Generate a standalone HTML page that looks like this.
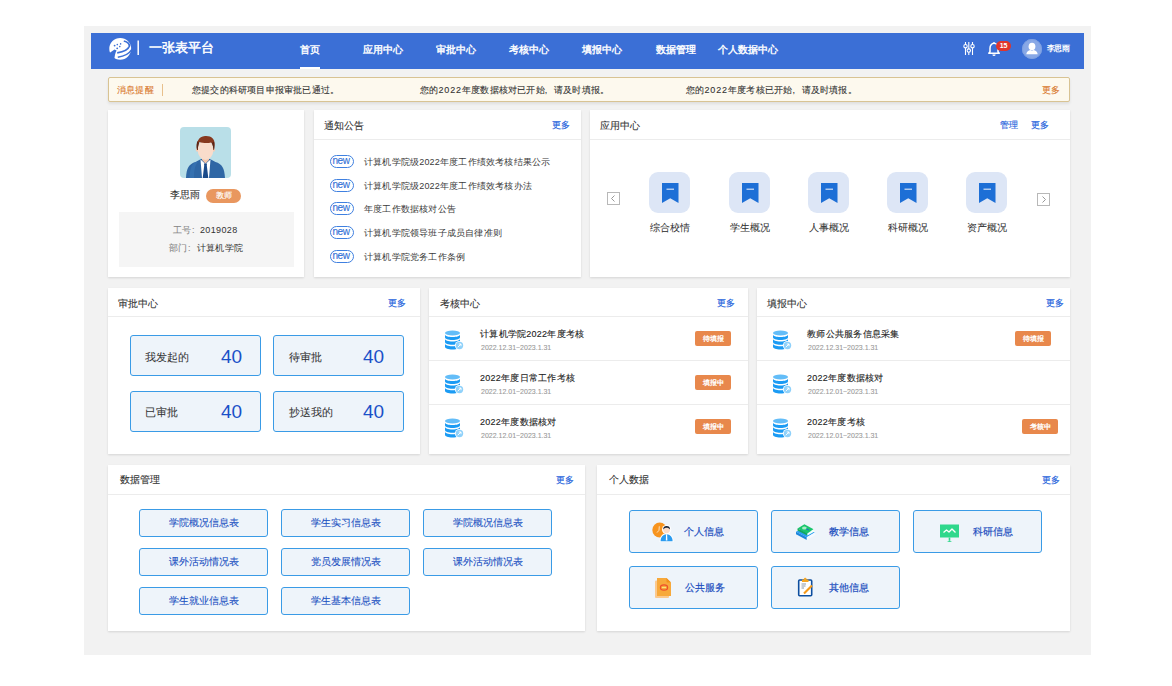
<!DOCTYPE html>
<html><head><meta charset="utf-8">
<style>
*{margin:0;padding:0;box-sizing:border-box}
html,body{width:1172px;height:686px;overflow:hidden;background:#fff}
body{font-family:"Liberation Sans",sans-serif;position:relative;color:#333;-webkit-text-stroke-width:0.1px}
.a{position:absolute;white-space:nowrap}
#wrap{position:absolute;left:84px;top:26px;width:1007px;height:629px;background:#f2f2f2}
#nav{position:absolute;left:91px;top:33px;width:993px;height:36px;background:#3b6fd6}
.nv{position:absolute;top:43px;height:14px;line-height:14px;font-size:10px;color:#fff;-webkit-text-stroke-width:0.4px}
#notice{position:absolute;left:108px;top:77px;width:962px;height:25px;background:#fdf9ee;border:1px solid #d8c393;border-radius:2px;box-shadow:0 2px 3px rgba(0,0,0,0.08)}
.nt{position:absolute;top:84px;height:13px;line-height:13px;font-size:9px;color:#333;letter-spacing:0.2px}
.card{position:absolute;background:#fff;box-shadow:0 1px 2px rgba(0,0,0,0.12)}
.hd{position:absolute;left:0;right:0;top:0;border-bottom:1px solid #ececec}
.ttl{position:absolute;font-size:10px;line-height:14px;height:14px;color:#333}
.more{position:absolute;font-size:9px;line-height:12px;height:12px;color:#2563dc;-webkit-text-stroke-width:0.15px}
.newb{position:absolute;width:24px;height:13px;border:1px solid #3f80e0;border-radius:7px;color:#2f6fd6;font-size:10px;line-height:10px;text-align:center;letter-spacing:-0.4px;-webkit-text-stroke-width:0.1px;padding-right:2px}
.nli{position:absolute;font-size:9px;line-height:12px;height:12px;color:#3a3a3a;letter-spacing:0.2px;margin-top:1px;-webkit-text-stroke-width:0}
.ibox{position:absolute;width:41px;height:41px;border-radius:9px;background:#dde6f6}
.ilab{position:absolute;font-size:10px;line-height:14px;height:14px;color:#333;-webkit-text-stroke-width:0.05px}
.sbox{position:absolute;width:131px;height:41px;background:#eef4fa;border:1px solid #3a9be6;border-radius:3px}
.slab{position:absolute;font-size:11px;line-height:14px;color:#333;-webkit-text-stroke-width:0.05px}
.snum{position:absolute;font-size:19px;line-height:20px;color:#1a50c8;-webkit-text-stroke-width:0}
.row{position:absolute;left:0;right:0;height:1px;background:#ececec}
.it{position:absolute;margin-left:1px;font-size:9px;line-height:13px;height:13px;color:#222;-webkit-text-stroke-width:0.12px;letter-spacing:0.25px}
.dt{position:absolute;font-size:8px;line-height:10px;height:10px;color:#999;margin-left:1.5px;transform:scaleX(0.875);transform-origin:0 0}
.bdg{position:absolute;width:36px;height:15px;background:#e8884c;border-radius:2px;color:#fff;font-size:7px;line-height:15px;text-align:center;-webkit-text-stroke-width:0.3px}
.btn{position:absolute;width:129px;height:28px;background:#eef4fa;border:1px solid #3a9be6;border-radius:3px;color:#1d52c2;font-size:10px;line-height:26px;text-align:center}
.pbtn{position:absolute;width:129px;height:43px;background:#eef4fa;border:1px solid #3a9be6;border-radius:3px}
.pl{position:absolute;font-size:10px;line-height:14px;color:#1d4fbf;-webkit-text-stroke-width:0.2px}
</style></head><body>
<div id="wrap"></div>
<div id="nav"></div>
<!-- logo -->
<svg class="a" style="left:108px;top:37px" width="24" height="24" viewBox="0 0 24 24">
<circle cx="12.2" cy="11.8" r="10.9" fill="#fff"/>
<path d="M0 17 L6.5 12.6 L8.6 13.4 C7.2 16 6.4 19.5 6.2 24 L0 24 Z" fill="#3b6fd6"/>
<path d="M15.8 4 C19.5 4.8 22 6.8 21.2 9.6 C20.2 12.6 15.5 14.8 9.2 15.8" stroke="#3b6fd6" stroke-width="1.7" fill="none"/>
<path d="M23.5 13 C21 17.2 16 19.3 9.8 20.3" stroke="#3b6fd6" stroke-width="1.5" fill="none"/>
<circle cx="6.6" cy="8.6" r="0.9" fill="#3b6fd6"/><circle cx="9.3" cy="7.6" r="0.8" fill="#3b6fd6"/>
<circle cx="12.6" cy="6.9" r="0.8" fill="#3b6fd6"/><circle cx="11.8" cy="9.6" r="0.8" fill="#3b6fd6"/>
<circle cx="9.2" cy="11.3" r="0.9" fill="#3b6fd6"/>
</svg>
<svg class="a" style="left:136px;top:40px" width="4" height="16"><line x1="2.2" y1="0.5" x2="2.2" y2="15" stroke="#fff" stroke-width="1.5"/></svg>
<div class="a" style="left:149px;top:39px;font-size:13px;line-height:18px;color:#fff;-webkit-text-stroke-width:0.5px">一张表平台</div>
<div class="nv" style="left:300px">首页</div>
<div class="a" style="left:300px;top:67px;width:20px;height:2px;background:#fff"></div>
<div class="nv" style="left:363px">应用中心</div>
<div class="nv" style="left:436px">审批中心</div>
<div class="nv" style="left:509px">考核中心</div>
<div class="nv" style="left:582px">填报中心</div>
<div class="nv" style="left:656px">数据管理</div>
<div class="nv" style="left:718px">个人数据中心</div>
<!-- slider icon -->
<svg class="a" style="left:962px;top:41px" width="14" height="15" viewBox="0 0 14 15">
<g stroke="#fff" stroke-width="1.1" fill="none"><path d="M3.5 1V14M6.8 1V14M10.5 1V14"/>
<circle cx="3.5" cy="5.2" r="1.7" fill="#3b6fd6"/><circle cx="6.8" cy="9.6" r="1.7" fill="#3b6fd6"/><circle cx="10.5" cy="5.2" r="1.7" fill="#3b6fd6"/></g>
</svg>
<!-- bell -->
<svg class="a" style="left:987px;top:41px" width="14" height="16" viewBox="0 0 14 16">
<path d="M1.8 12.3 L3 10.8 V7.2 C3 4.5 4.7 2.3 7 2.3 C9.3 2.3 11 4.5 11 7.2 V10.8 L12.2 12.3 Z" stroke="#fff" stroke-width="1.5" fill="none" stroke-linejoin="round"/>
<path d="M5.8 13.6 a1.3 1.3 0 0 0 2.4 0" stroke="#fff" stroke-width="1.2" fill="none"/>
<path d="M7 1V2.3" stroke="#fff" stroke-width="1.2"/>
</svg>
<div class="a" style="left:996px;top:41px;width:15px;height:10px;border-radius:5px;background:#e0352b;color:#fff;font-size:7px;font-weight:bold;line-height:10px;text-align:center;letter-spacing:-0.2px;-webkit-text-stroke-width:0">15</div>
<!-- avatar -->
<svg class="a" style="left:1022px;top:39px" width="20" height="20" viewBox="0 0 20 20">
<circle cx="10" cy="10" r="10" fill="#88a8e6"/>
<circle cx="10" cy="10" r="9.5" fill="none" stroke="#7d9fe0" stroke-width="1"/>
<ellipse cx="10" cy="7.6" rx="3.4" ry="3.8" fill="#fff"/>
<path d="M4.3 15.2 C4.6 12.6 6.5 11.3 8.4 11 L10 12 L11.6 11 C13.5 11.3 15.4 12.6 15.7 15.2 Z" fill="#fff"/>
</svg>
<div class="a" style="left:1047px;top:43px;font-size:8px;line-height:12px;font-weight:bold;color:#fff;letter-spacing:-0.6px;-webkit-text-stroke-width:0">李思雨</div>

<!-- notice bar -->
<div id="notice"></div>
<div class="nt" style="left:117px;color:#d9782c">消息提醒</div>
<div class="a" style="left:162px;top:84px;width:1px;height:12px;background:#e8c08c"></div>
<div class="nt" style="left:192px">您提交的科研项目申报审批已通过。</div>
<div class="nt" style="left:420px">您的<span style="letter-spacing:0.9px">2022</span>年度数据核对已开始<span style="display:inline-block;width:9.2px">,</span>请及时填报。</div>
<div class="nt" style="left:686px">您的<span style="letter-spacing:0.9px">2022</span>年度考核已开始<span style="display:inline-block;width:9.2px">,</span>请及时填报。</div>
<div class="nt" style="left:1042px;color:#d9782c">更多</div>

<!-- ROW1 -->
<div class="card" style="left:108px;top:110px;width:196px;height:167px"></div>
<div class="card" style="left:314px;top:110px;width:267px;height:167px"><div class="hd" style="height:30px"></div></div>
<div class="card" style="left:590px;top:110px;width:480px;height:167px"><div class="hd" style="height:30px"></div></div>

<!-- ROW2 -->
<div class="card" style="left:108px;top:288px;width:312px;height:166px"><div class="hd" style="height:29px"></div></div>
<div class="card" style="left:429px;top:288px;width:319px;height:166px"><div class="hd" style="height:29px"></div></div>
<div class="card" style="left:757px;top:288px;width:313px;height:166px"><div class="hd" style="height:29px"></div></div>

<!-- ROW3 -->
<div class="card" style="left:108px;top:465px;width:477px;height:166px"><div class="hd" style="height:30px"></div></div>
<div class="card" style="left:597px;top:465px;width:473px;height:166px"><div class="hd" style="height:30px"></div></div>


<!-- profile -->
<div class="a" style="left:180px;top:127px;width:51px;height:51px;border-radius:4px;background:#b9dfe8;overflow:hidden">
<svg width="51" height="51" viewBox="0 0 51 51">
<path d="M6 51 C6.5 41 9 37 15.5 35 L21 32 L30 32 L35.5 35 C42 37 44.5 41 45 51 Z" fill="#2f67a5"/>
<path d="M15.5 35 C12 37 10 41 9.5 51 L14 51 C14 43 15 38 18 35 Z" fill="#3a78b8" opacity="0.6"/>
<path d="M20.5 32.5 L25.5 37 L30.5 32.5 L29 51 L22 51 Z" fill="#fff"/>
<path d="M24 36.5 L27 36.5 L26.8 38.5 L28.3 51 L22.7 51 L24.2 38.5 Z" fill="#1b4b8a"/>
<path d="M22 28 H29 V33 L25.5 36.5 L22 33 Z" fill="#f1c4a8"/>
<circle cx="17.6" cy="23" r="1.8" fill="#f3cdb6"/><circle cx="33.4" cy="23" r="1.8" fill="#f3cdb6"/>
<ellipse cx="25.5" cy="23" rx="7.8" ry="10" fill="#f9dccb"/>
<path d="M17 23 C16 15 18.5 9.5 25 9 C31 8.5 35 11.5 34.5 17.5 L34 23 C33 19 32.5 16.5 31 15.5 C28 16.5 22 16 19.5 15 C18.5 17 18 19.5 17.5 23 Z" fill="#87391f"/>
<path d="M17 23 C16.3 19 16.5 16 17.5 14 L19 16 C18.3 18 18 20.5 17.8 23 Z M34 23 C34.5 20 34.8 17 34 14.5 L32 16 C32.8 18 33.2 20.5 33.5 23 Z" fill="#5e2413"/>
</svg></div>
<div class="a" style="left:170px;top:188px;font-size:10px;line-height:14px;color:#333">李思雨</div>
<div class="a" style="left:206px;top:189px;width:35px;height:14px;border-radius:7px;background:#e9975f;color:#fff;font-size:8px;line-height:14px;text-align:center;-webkit-text-stroke-width:0.15px">教师</div>
<div class="a" style="left:119px;top:212px;width:175px;height:55px;background:#f5f5f5"></div>
<div class="a" style="left:173px;top:224px;font-size:9px;line-height:13px;color:#888">工号<span style="display:inline-block;width:9px;padding-left:1px">:</span><span style="color:#333;letter-spacing:0.35px;-webkit-text-stroke-width:0">2019028</span></div>
<div class="a" style="left:169px;top:242px;font-size:9px;line-height:13px;color:#888">部门<span style="display:inline-block;width:9px;padding-left:1px">:</span><span style="color:#333;letter-spacing:0.2px;margin-left:1px;-webkit-text-stroke-width:0">计算机学院</span></div>

<!-- notices -->
<div class="ttl" style="left:324px;top:119px">通知公告</div>
<div class="more" style="left:552px;top:119px">更多</div>
<div class="newb" style="left:330px;top:155px">new</div>
<div class="nli" style="left:364px;top:155px">计算机学院级2022年度工作绩效考核结果公示</div>
<div class="newb" style="left:330px;top:179px">new</div>
<div class="nli" style="left:364px;top:179px">计算机学院级2022年度工作绩效考核办法</div>
<div class="newb" style="left:330px;top:202px">new</div>
<div class="nli" style="left:364px;top:202px">年度工作数据核对公告</div>
<div class="newb" style="left:330px;top:226px">new</div>
<div class="nli" style="left:364px;top:226px">计算机学院领导班子成员自律准则</div>
<div class="newb" style="left:330px;top:250px">new</div>
<div class="nli" style="left:364px;top:250px">计算机学院党务工作条例</div>

<!-- app center -->
<div class="ttl" style="left:600px;top:119px">应用中心</div>
<div class="more" style="left:1000px;top:119px">管理</div>
<div class="more" style="left:1031px;top:119px">更多</div>
<svg class="a" style="left:607px;top:192px" width="13" height="13" viewBox="0 0 13 13"><rect x="0.5" y="0.5" width="12" height="12" fill="#fff" stroke="#b8b8b8"/><path d="M7.5 3.5 L4.5 6.5 L7.5 9.5" stroke="#999" fill="none"/></svg>
<svg class="a" style="left:1037px;top:193px" width="13" height="13" viewBox="0 0 13 13"><rect x="0.5" y="0.5" width="12" height="12" fill="#fff" stroke="#b8b8b8"/><path d="M5.5 3.5 L8.5 6.5 L5.5 9.5" stroke="#999" fill="none"/></svg>
<div class="ibox" style="left:649px;top:172px"><svg style="position:absolute;left:12px;top:10px" width="18" height="22" viewBox="0 0 18 22"><path d="M1 1 H17.5 V21 L9.25 16.3 L1 21 Z" fill="#1d6fd6"/><rect x="5.5" y="6.6" width="7.5" height="1.2" fill="#d5e2f5"/></svg></div>
<div class="ilab" style="left:650.0px;top:221px">综合校情</div>
<div class="ibox" style="left:728.5px;top:172px"><svg style="position:absolute;left:12px;top:10px" width="18" height="22" viewBox="0 0 18 22"><path d="M1 1 H17.5 V21 L9.25 16.3 L1 21 Z" fill="#1d6fd6"/><rect x="5.5" y="6.6" width="7.5" height="1.2" fill="#d5e2f5"/></svg></div>
<div class="ilab" style="left:729.5px;top:221px">学生概况</div>
<div class="ibox" style="left:808px;top:172px"><svg style="position:absolute;left:12px;top:10px" width="18" height="22" viewBox="0 0 18 22"><path d="M1 1 H17.5 V21 L9.25 16.3 L1 21 Z" fill="#1d6fd6"/><rect x="5.5" y="6.6" width="7.5" height="1.2" fill="#d5e2f5"/></svg></div>
<div class="ilab" style="left:809.0px;top:221px">人事概况</div>
<div class="ibox" style="left:887px;top:172px"><svg style="position:absolute;left:12px;top:10px" width="18" height="22" viewBox="0 0 18 22"><path d="M1 1 H17.5 V21 L9.25 16.3 L1 21 Z" fill="#1d6fd6"/><rect x="5.5" y="6.6" width="7.5" height="1.2" fill="#d5e2f5"/></svg></div>
<div class="ilab" style="left:888.0px;top:221px">科研概况</div>
<div class="ibox" style="left:966px;top:172px"><svg style="position:absolute;left:12px;top:10px" width="18" height="22" viewBox="0 0 18 22"><path d="M1 1 H17.5 V21 L9.25 16.3 L1 21 Z" fill="#1d6fd6"/><rect x="5.5" y="6.6" width="7.5" height="1.2" fill="#d5e2f5"/></svg></div>
<div class="ilab" style="left:967.0px;top:221px">资产概况</div>

<!-- approval -->
<div class="ttl" style="left:118px;top:297px">审批中心</div>
<div class="more" style="left:388px;top:297px">更多</div>
<div class="sbox" style="left:130px;top:335px"></div>
<div class="sbox" style="left:273px;top:335px"></div>
<div class="sbox" style="left:130px;top:391px"></div>
<div class="sbox" style="left:273px;top:391px"></div>
<div class="slab" style="left:145px;top:350px">我发起的</div>
<div class="snum" style="left:221px;top:347px">40</div>
<div class="slab" style="left:289px;top:350px">待审批</div>
<div class="snum" style="left:363px;top:347px">40</div>
<div class="slab" style="left:145px;top:405px">已审批</div>
<div class="snum" style="left:221px;top:402px">40</div>
<div class="slab" style="left:289px;top:405px">抄送我的</div>
<div class="snum" style="left:363px;top:402px">40</div>

<!-- assessment -->
<div class="ttl" style="left:440px;top:297px">考核中心</div>
<div class="more" style="left:717px;top:297px">更多</div>
<div class="row" style="left:429px;width:319px;top:316px"></div>
<div class="row" style="left:429px;width:319px;top:360px"></div>
<div class="row" style="left:429px;width:319px;top:404px"></div>
<!-- fill -->
<div class="ttl" style="left:767px;top:297px">填报中心</div>
<div class="more" style="left:1046px;top:297px">更多</div>
<div class="row" style="left:757px;width:313px;top:360px"></div>
<div class="row" style="left:757px;width:313px;top:404px"></div>
<svg class="a" style="left:444px;top:330px" width="21" height="21" viewBox="0 0 21 21">
<ellipse cx="8.5" cy="3" rx="7.5" ry="2.6" fill="#63bdf8"/>
<path d="M1 4.2 C1 6 4 7 8.5 7 C13 7 16 6 16 4.2 V7.3 C16 9 13 10 8.5 10 C4 10 1 9 1 7.3 Z" fill="#1b9bf4"/>
<path d="M1 8.8 C1 10.5 4 11.5 8.5 11.5 C13 11.5 16 10.5 16 8.8 V12 C16 13.7 13 14.7 8.5 14.7 C4 14.7 1 13.7 1 12 Z" fill="#1b9bf4"/>
<path d="M1 13.5 C1 15.2 4 16.2 8.5 16.2 C13 16.2 16 15.2 16 13.5 V16.7 C16 18.4 13 19.4 8.5 19.4 C4 19.4 1 18.4 1 16.7 Z" fill="#1b9bf4"/>
<circle cx="15.5" cy="15.5" r="4.6" fill="#fff"/>
<circle cx="15.5" cy="15.5" r="3.7" fill="#8fd1fa"/>
<path d="M13.8 17.2 L17 14 M14.8 14 H17 V16.2" stroke="#fff" stroke-width="0.9" fill="none"/>
</svg><div class="it" style="left:479px;top:328px">计算机学院2022年度考核</div><div class="dt" style="left:479px;top:343px">2022.12.31~2023.1.31</div><div class="bdg" style="left:695px;top:331px">待填报</div>
<svg class="a" style="left:444px;top:374px" width="21" height="21" viewBox="0 0 21 21">
<ellipse cx="8.5" cy="3" rx="7.5" ry="2.6" fill="#63bdf8"/>
<path d="M1 4.2 C1 6 4 7 8.5 7 C13 7 16 6 16 4.2 V7.3 C16 9 13 10 8.5 10 C4 10 1 9 1 7.3 Z" fill="#1b9bf4"/>
<path d="M1 8.8 C1 10.5 4 11.5 8.5 11.5 C13 11.5 16 10.5 16 8.8 V12 C16 13.7 13 14.7 8.5 14.7 C4 14.7 1 13.7 1 12 Z" fill="#1b9bf4"/>
<path d="M1 13.5 C1 15.2 4 16.2 8.5 16.2 C13 16.2 16 15.2 16 13.5 V16.7 C16 18.4 13 19.4 8.5 19.4 C4 19.4 1 18.4 1 16.7 Z" fill="#1b9bf4"/>
<circle cx="15.5" cy="15.5" r="4.6" fill="#fff"/>
<circle cx="15.5" cy="15.5" r="3.7" fill="#8fd1fa"/>
<path d="M13.8 17.2 L17 14 M14.8 14 H17 V16.2" stroke="#fff" stroke-width="0.9" fill="none"/>
</svg><div class="it" style="left:479px;top:372px">2022年度日常工作考核</div><div class="dt" style="left:479px;top:387px">2022.12.01~2023.1.31</div><div class="bdg" style="left:695px;top:375px">填报中</div>
<svg class="a" style="left:444px;top:418px" width="21" height="21" viewBox="0 0 21 21">
<ellipse cx="8.5" cy="3" rx="7.5" ry="2.6" fill="#63bdf8"/>
<path d="M1 4.2 C1 6 4 7 8.5 7 C13 7 16 6 16 4.2 V7.3 C16 9 13 10 8.5 10 C4 10 1 9 1 7.3 Z" fill="#1b9bf4"/>
<path d="M1 8.8 C1 10.5 4 11.5 8.5 11.5 C13 11.5 16 10.5 16 8.8 V12 C16 13.7 13 14.7 8.5 14.7 C4 14.7 1 13.7 1 12 Z" fill="#1b9bf4"/>
<path d="M1 13.5 C1 15.2 4 16.2 8.5 16.2 C13 16.2 16 15.2 16 13.5 V16.7 C16 18.4 13 19.4 8.5 19.4 C4 19.4 1 18.4 1 16.7 Z" fill="#1b9bf4"/>
<circle cx="15.5" cy="15.5" r="4.6" fill="#fff"/>
<circle cx="15.5" cy="15.5" r="3.7" fill="#8fd1fa"/>
<path d="M13.8 17.2 L17 14 M14.8 14 H17 V16.2" stroke="#fff" stroke-width="0.9" fill="none"/>
</svg><div class="it" style="left:479px;top:416px">2022年度数据核对</div><div class="dt" style="left:479px;top:431px">2022.12.01~2023.1.31</div><div class="bdg" style="left:695px;top:419px">填报中</div>
<svg class="a" style="left:772px;top:330px" width="21" height="21" viewBox="0 0 21 21">
<ellipse cx="8.5" cy="3" rx="7.5" ry="2.6" fill="#63bdf8"/>
<path d="M1 4.2 C1 6 4 7 8.5 7 C13 7 16 6 16 4.2 V7.3 C16 9 13 10 8.5 10 C4 10 1 9 1 7.3 Z" fill="#1b9bf4"/>
<path d="M1 8.8 C1 10.5 4 11.5 8.5 11.5 C13 11.5 16 10.5 16 8.8 V12 C16 13.7 13 14.7 8.5 14.7 C4 14.7 1 13.7 1 12 Z" fill="#1b9bf4"/>
<path d="M1 13.5 C1 15.2 4 16.2 8.5 16.2 C13 16.2 16 15.2 16 13.5 V16.7 C16 18.4 13 19.4 8.5 19.4 C4 19.4 1 18.4 1 16.7 Z" fill="#1b9bf4"/>
<circle cx="15.5" cy="15.5" r="4.6" fill="#fff"/>
<circle cx="15.5" cy="15.5" r="3.7" fill="#8fd1fa"/>
<path d="M13.8 17.2 L17 14 M14.8 14 H17 V16.2" stroke="#fff" stroke-width="0.9" fill="none"/>
</svg><div class="it" style="left:806px;top:328px">教师公共服务信息采集</div><div class="dt" style="left:806px;top:343px">2022.12.31~2023.1.31</div><div class="bdg" style="left:1015px;top:331px">待填报</div>
<svg class="a" style="left:772px;top:374px" width="21" height="21" viewBox="0 0 21 21">
<ellipse cx="8.5" cy="3" rx="7.5" ry="2.6" fill="#63bdf8"/>
<path d="M1 4.2 C1 6 4 7 8.5 7 C13 7 16 6 16 4.2 V7.3 C16 9 13 10 8.5 10 C4 10 1 9 1 7.3 Z" fill="#1b9bf4"/>
<path d="M1 8.8 C1 10.5 4 11.5 8.5 11.5 C13 11.5 16 10.5 16 8.8 V12 C16 13.7 13 14.7 8.5 14.7 C4 14.7 1 13.7 1 12 Z" fill="#1b9bf4"/>
<path d="M1 13.5 C1 15.2 4 16.2 8.5 16.2 C13 16.2 16 15.2 16 13.5 V16.7 C16 18.4 13 19.4 8.5 19.4 C4 19.4 1 18.4 1 16.7 Z" fill="#1b9bf4"/>
<circle cx="15.5" cy="15.5" r="4.6" fill="#fff"/>
<circle cx="15.5" cy="15.5" r="3.7" fill="#8fd1fa"/>
<path d="M13.8 17.2 L17 14 M14.8 14 H17 V16.2" stroke="#fff" stroke-width="0.9" fill="none"/>
</svg><div class="it" style="left:806px;top:372px">2022年度数据核对</div><div class="dt" style="left:806px;top:387px">2022.12.01~2023.1.31</div>
<svg class="a" style="left:772px;top:418px" width="21" height="21" viewBox="0 0 21 21">
<ellipse cx="8.5" cy="3" rx="7.5" ry="2.6" fill="#63bdf8"/>
<path d="M1 4.2 C1 6 4 7 8.5 7 C13 7 16 6 16 4.2 V7.3 C16 9 13 10 8.5 10 C4 10 1 9 1 7.3 Z" fill="#1b9bf4"/>
<path d="M1 8.8 C1 10.5 4 11.5 8.5 11.5 C13 11.5 16 10.5 16 8.8 V12 C16 13.7 13 14.7 8.5 14.7 C4 14.7 1 13.7 1 12 Z" fill="#1b9bf4"/>
<path d="M1 13.5 C1 15.2 4 16.2 8.5 16.2 C13 16.2 16 15.2 16 13.5 V16.7 C16 18.4 13 19.4 8.5 19.4 C4 19.4 1 18.4 1 16.7 Z" fill="#1b9bf4"/>
<circle cx="15.5" cy="15.5" r="4.6" fill="#fff"/>
<circle cx="15.5" cy="15.5" r="3.7" fill="#8fd1fa"/>
<path d="M13.8 17.2 L17 14 M14.8 14 H17 V16.2" stroke="#fff" stroke-width="0.9" fill="none"/>
</svg><div class="it" style="left:806px;top:416px">2022年度考核</div><div class="dt" style="left:806px;top:431px">2022.12.01~2023.1.31</div><div class="bdg" style="left:1022px;top:419px">考核中</div>

<!-- data mgmt -->
<div class="ttl" style="left:120px;top:473px">数据管理</div>
<div class="more" style="left:556px;top:474px">更多</div>
<div class="btn" style="left:139px;top:509px">学院概况信息表</div>
<div class="btn" style="left:281px;top:509px">学生实习信息表</div>
<div class="btn" style="left:423px;top:509px">学院概况信息表</div>
<div class="btn" style="left:139px;top:548px">课外活动情况表</div>
<div class="btn" style="left:281px;top:548px">党员发展情况表</div>
<div class="btn" style="left:423px;top:548px">课外活动情况表</div>
<div class="btn" style="left:139px;top:587px">学生就业信息表</div>
<div class="btn" style="left:281px;top:587px">学生基本信息表</div>

<!-- personal -->
<div class="ttl" style="left:609px;top:473px">个人数据</div>
<div class="more" style="left:1042px;top:474px">更多</div>
<div class="pbtn" style="left:629px;top:510px"></div>
<div class="pbtn" style="left:771px;top:510px"></div>
<div class="pbtn" style="left:913px;top:510px"></div>
<div class="pbtn" style="left:629px;top:566px"></div>
<div class="pbtn" style="left:771px;top:566px"></div>
<div class="pl" style="left:684px;top:525px">个人信息</div>
<div class="pl" style="left:829px;top:525px">教学信息</div>
<div class="pl" style="left:973px;top:525px">科研信息</div>
<div class="pl" style="left:685px;top:581px">公共服务</div>
<div class="pl" style="left:829px;top:581px">其他信息</div>
<!-- icon person -->
<svg class="a" style="left:652px;top:522px" width="22" height="20" viewBox="0 0 22 20">
<circle cx="7.7" cy="8" r="7.4" fill="#f7941f"/>
<path d="M7.3 4.3 L7 8.3 L5 10.6" stroke="#fde8cc" stroke-width="0.9" fill="none"/>
<circle cx="14.6" cy="7.6" r="4.6" fill="#fff"/>
<path d="M7.6 20 C7.6 14.5 10.5 11.2 14.6 11.2 C18.7 11.2 21.6 14.5 21.6 20 Z" fill="#fff"/>
<path d="M8.6 19.3 C8.6 15.2 11 12.2 14.6 12.2 C18.2 12.2 20.6 15.2 20.6 19.3 Z" fill="#2a9bf0"/>
<path d="M14.1 12.3 H15.1 L15.4 18.6 H13.8 Z" fill="#fff"/>
<circle cx="14.6" cy="7.8" r="3.4" fill="#fbdcc9"/>
<path d="M11.1 7.6 C11.1 5.2 12.6 4.1 14.6 4.1 C16.6 4.1 18.1 5.2 18.1 7.6 C17.2 6.2 16 5.7 14.6 5.7 C13.2 5.7 12 6.2 11.1 7.6 Z" fill="#142033"/>
</svg>
<!-- books -->
<svg class="a" style="left:795px;top:523px" width="22" height="18" viewBox="0 0 22 18">
<path d="M1 8.8 L9 4.8 L19.8 9.6 L11.8 14.3 Z" fill="#2a9df2"/>
<path d="M1 8.8 L11.8 14.3 L11.8 17 L1 11.3 Z" fill="#1b86dc"/>
<path d="M11.8 14.3 L19.8 9.6 L20.6 12 L11.8 17 Z" fill="#f4f9ff"/>
<path d="M2.5 5.5 L9.4 1.2 L18.6 6.3 L12.4 10.4 Z" fill="#19c66c"/>
<path d="M2.5 5.5 L12.4 10.4 L12.4 12.6 L2.5 7.5 Z" fill="#12a95a"/>
<path d="M12.4 10.4 L18.6 6.3 L19.6 8.6 L12.4 12.6 Z" fill="#f2fff7"/>
<ellipse cx="9.4" cy="5" rx="2.4" ry="1.5" fill="#a8ecc6"/>
<path d="M11.2 5.8 L14 7.2" stroke="#1b6fd0" stroke-width="1"/>
</svg>
<!-- presentation -->
<svg class="a" style="left:939px;top:523px" width="21" height="20" viewBox="0 0 21 20">
<rect x="1" y="1.5" width="19" height="13" fill="#2fd88c"/>
<path d="M4.5 9.5 L7.5 7 L10 9 L13 6 L16.5 9.5" stroke="#fff" stroke-width="1.3" fill="none" stroke-linejoin="round"/>
<rect x="9.7" y="14.5" width="1.6" height="3.3" fill="#2fd88c"/>
<path d="M8 19 Q10.5 17 13 19 Z" fill="#2fd88c"/>
</svg>
<!-- doc -->
<svg class="a" style="left:654px;top:577px" width="18" height="22" viewBox="0 0 18 22">
<rect x="1" y="3.5" width="14" height="17.5" rx="1" fill="#fbc98d"/>
<path d="M3 1 H12.5 L17 5.5 V19 H3 Z" fill="#f7a93b"/>
<path d="M12.5 1 L17 5.5 H13.5 Q12.5 5.5 12.5 4.5 Z" fill="#f38f1a"/>
<ellipse cx="10" cy="10.5" rx="3.6" ry="2.6" fill="none" stroke="#ee4f2c" stroke-width="1.2"/>
<path d="M8 10.5 H12" stroke="#fbe07a" stroke-width="1"/>
</svg>
<!-- clipboard -->
<svg class="a" style="left:797px;top:577px" width="18" height="20" viewBox="0 0 18 20">
<rect x="1.7" y="3" width="13" height="15.8" rx="1" fill="#fff" stroke="#0d4e9f" stroke-width="1.6"/>
<path d="M5 2.5 H11.5 V5 H5 Z" fill="#f5a623"/>
<circle cx="8.2" cy="2" r="1.3" fill="#f5a623"/>
<path d="M4.5 7 H9 M4.5 9 H8.5 M4.5 11 H7" stroke="#8a97a8" stroke-width="1"/>
<path d="M7 16.5 L15 8.5" stroke="#f59a1b" stroke-width="2.2"/>
</svg>
<!--CONTENT-->
</body></html>
